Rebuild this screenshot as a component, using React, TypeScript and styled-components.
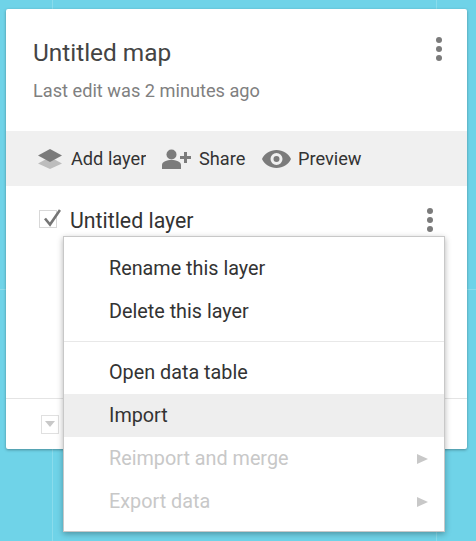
import { ReactNode } from "react";
import styled, { createGlobalStyle } from "styled-components";

const GlobalStyle = createGlobalStyle`
  html, body {
    margin: 0;
    height: 541px;
    overflow: hidden;
  }
  body {
    font-family: Roboto, "Liberation Sans", sans-serif;
    background-color: #6fd3e8;
    background-image:
      linear-gradient(#8adcec, #8adcec),
      linear-gradient(#8adcec, #8adcec),
      linear-gradient(#8adcec, #8adcec);
    background-size: 1px 100%, 1px 100%, 100% 1px;
    background-position: 52px 0, 436px 0, 0 289px;
    background-repeat: no-repeat;
  }
`;

const Page = styled.div`
  padding: 9px 9px 0 6px;
`;

const Card = styled.div`
  position: relative;
  height: 440px;
  display: flex;
  flex-direction: column;
  background: #fff;
  border-radius: 2px;
  box-shadow: 0 1px 3px rgba(0, 0, 0, 0.35);
`;

const Header = styled.header`
  position: relative;
  height: 122px;
  padding: 29px 27px 0;
  box-sizing: border-box;
`;

const Title = styled.h1`
  margin: 0;
  font-size: 24.4px;
  line-height: 30px;
  font-weight: 400;
  color: #444;
`;

const Subtitle = styled.p`
  margin: 12px 0 0;
  font-size: 18.2px;
  line-height: 22px;
  color: #808080;
`;

const Dots = styled.span<{ $top: number; $right: number }>`
  position: absolute;
  top: ${(props) => props.$top}px;
  right: ${(props) => props.$right}px;
  display: flex;
  flex-direction: column;
  gap: 3px;

  i {
    display: block;
    width: 6px;
    height: 6px;
    border-radius: 50%;
    background: #7b7b7b;
  }
`;

const Toolbar = styled.div`
  height: 55px;
  display: flex;
  align-items: center;
  gap: 16px;
  padding-left: 31px;
  background: #f0f0f0;
`;

const ToolButton = styled.div<{ $width: number }>`
  width: ${(props) => props.$width}px;
  display: flex;
  align-items: center;
  gap: 7px;
  font-size: 18.2px;
  color: #333;
  white-space: nowrap;
  overflow: hidden;

  svg {
    flex: none;
  }
`;

const LayerRow = styled.div`
  position: relative;
  height: 68px;
  display: flex;
  align-items: center;
  padding-left: 33px;
  gap: 9px;
  font-size: 21.3px;
  color: #333;
  box-sizing: border-box;
`;

const Spacer = styled.div`
  flex: 1;
`;

const Footer = styled.footer`
  height: 50px;
  display: flex;
  align-items: center;
  padding-left: 35px;
  border-top: 1px solid #e4e4e4;
`;

const DropBox = styled.span`
  width: 16px;
  height: 17px;
  display: flex;
  align-items: center;
  justify-content: center;
  border: 1px solid #e0e0e0;

  &::after {
    content: "";
    border-left: 5px solid transparent;
    border-right: 5px solid transparent;
    border-top: 6px solid #c8c8c8;
  }
`;

const Menu = styled.div`
  position: absolute;
  left: 57px;
  top: 227px;
  width: 382px;
  height: 296px;
  padding-top: 10px;
  box-sizing: border-box;
  background: #fff;
  border: 1px solid #c8c8c8;
  box-shadow: 0 2px 6px rgba(0, 0, 0, 0.3);
`;

const MenuItem = styled.div<{ $active?: boolean; $disabled?: boolean }>`
  height: 43px;
  display: flex;
  align-items: center;
  justify-content: space-between;
  padding: 0 16px 0 45px;
  font-size: 19.8px;
  color: ${(props) => (props.$disabled ? "#c8c8c8" : "#333")};
  background: ${(props) => (props.$active ? "#eeeeee" : "transparent")};
`;

const Arrow = styled.span`
  border-top: 5px solid transparent;
  border-bottom: 5px solid transparent;
  border-left: 11px solid #c8c8c8;
`;

const MenuDivider = styled.div`
  height: 1px;
  margin: 8px 0 9px;
  background: #e8e8e8;
`;

function LayersIcon() {
  return (
    <svg width="27" height="22" viewBox="0 0 27 22">
      <path d="M13 9 L25 15.500 L13 21 L1 15.500 Z" fill="#bdbdbd" />
      <path d="M13 1 L25 7.500 L13 14 L1 7.500 Z" fill="#7b7b7b" />
    </svg>
  );
}

function AddPersonIcon() {
  return (
    <svg width="30" height="20" viewBox="0 0 30 20">
      <circle cx="9.500" cy="5.500" r="5" fill="#7b7b7b" />
      <path d="M0 20 V16 C0 12.500 5 11 9.500 11 C14 11 19 12.500 19 16 V20 Z" fill="#7b7b7b" />
      <path d="M22 3 h3 v4 h4 v3 h-4 v4 h-3 v-4 h-4 v-3 h4 z" fill="#7b7b7b" />
    </svg>
  );
}

function EyeIcon() {
  return (
    <svg width="29" height="20" viewBox="0 0 29 20">
      <path
        fillRule="evenodd"
        fill="#7b7b7b"
        d="M14.500 1 C8 1 2.500 4.500 0 10 C2.500 15.500 8 19 14.500 19 C21 19 26.500 15.500 29 10 C26.500 4.500 21 1 14.500 1 Z M14.500 16 A6 6 0 1 1 14.500 4 A6 6 0 0 1 14.500 16 Z M14.500 7 A3 3 0 1 0 14.500 13 A3 3 0 0 0 14.500 7 Z"
      />
    </svg>
  );
}

function CheckIcon() {
  return (
    <svg width="22" height="22" viewBox="0 0 22 22">
      <rect x="0.500" y="1.500" width="17" height="17" fill="none" stroke="#d8d8d8" />
      <path d="M6 9.500 L11 15.500 L21 1" fill="none" stroke="#757575" strokeWidth="2.600" />
    </svg>
  );
}

function Tool({ icon, label, width }: { icon: ReactNode; label: string; width: number }) {
  return (
    <ToolButton $width={width}>
      {icon}
      {label}
    </ToolButton>
  );
}

function ThreeDots({ top, right }: { top: number; right: number }) {
  return (
    <Dots $top={top} $right={right}>
      <i />
      <i />
      <i />
    </Dots>
  );
}

export default function App() {
  return (
    <Page>
      <GlobalStyle />
      <Card>
        <Header>
          <Title>Untitled map</Title>
          <Subtitle>Last edit was 2 minutes ago</Subtitle>
          <ThreeDots top={28} right={25} />
        </Header>
        <Toolbar>
          <Tool icon={<LayersIcon />} label="Add layer" width={109} />
          <Tool icon={<AddPersonIcon />} label="Share" width={84} />
          <Tool icon={<EyeIcon />} label="Preview" width={110} />
        </Toolbar>
        <LayerRow>
          <CheckIcon />
          Untitled layer
          <ThreeDots top={22} right={34} />
        </LayerRow>
        <Spacer />
        <Footer>
          <DropBox />
        </Footer>
        <Menu>
          <MenuItem>Rename this layer</MenuItem>
          <MenuItem>Delete this layer</MenuItem>
          <MenuDivider />
          <MenuItem>Open data table</MenuItem>
          <MenuItem $active>Import</MenuItem>
          <MenuItem $disabled>
            Reimport and merge
            <Arrow />
          </MenuItem>
          <MenuItem $disabled>
            Export data
            <Arrow />
          </MenuItem>
        </Menu>
      </Card>
    </Page>
  );
}
